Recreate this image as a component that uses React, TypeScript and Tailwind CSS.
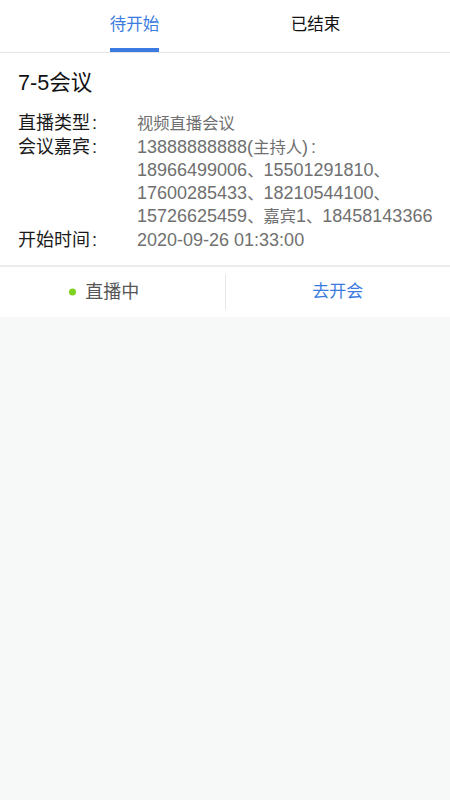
import React from "react";

const font = {
  fontFamily: '"Liberation Sans", "Noto Sans CJK SC", sans-serif',
};

function V({ text }: { text: string }) {
  const parts = text.split(/([\u3000-\u303f\u4e00-\u9fff\uff00-\uffef]+)/);
  return (
    <>
      {parts.map((p, i) =>
        /[\u3000-\u303f\u4e00-\u9fff\uff00-\uffef]/.test(p) ? (
          <span key={i} className="text-[16.3px]">
            {p}
          </span>
        ) : (
          <React.Fragment key={i}>{p}</React.Fragment>
        )
      )}
    </>
  );
}

export default function App() {
  return (
    <div className="min-h-[800px] w-full bg-[#f7f8f8] flex flex-col" style={font}>
      {/* Tabs */}
      <div className="bg-white border-b border-[#e6e6e6] grid grid-cols-2 px-[44px] h-[53px]">
        <div className="flex flex-col items-center">
          <div className="flex flex-col items-stretch h-full">
            <span className="pt-[12px] text-[16.5px] leading-[24px] text-[#3b7be0]">待开始</span>
            <div className="mt-auto h-[4px] bg-[#3b7be0]" />
          </div>
        </div>
        <div className="flex flex-col items-center">
          <span className="pt-[12px] text-[16.5px] leading-[24px] text-[#111]">已结束</span>
        </div>
      </div>

      {/* Card */}
      <div className="bg-white">
        <div className="px-[18px] pt-[16px] pb-[13px] border-b-2 border-[#ececec]">
          <div className="text-[21.6px] leading-[28px] text-[#111] mb-[15px]">7-5会议</div>
          <div className="flex flex-col gap-[1px] text-[18px] leading-[23px]">
            <div className="flex">
              <span className="w-[119px] shrink-0 text-[#1a1a1a]">直播类型<span className="ml-[2px]">:</span></span>
              <span className="text-[#707070]"><V text="视频直播会议" /></span>
            </div>
            <div className="flex">
              <span className="w-[119px] shrink-0 text-[#1a1a1a]">会议嘉宾<span className="ml-[2px]">:</span></span>
              <div className="flex flex-col text-[#707070] whitespace-nowrap">
                <span><V text="13888888888(主持人)" /><span className="ml-[3px]">:</span></span>
                <span><V text="18966499006、15501291810、" /></span>
                <span><V text="17600285433、18210544100、" /></span>
                <span><V text="15726625459、嘉宾1、18458143366" /></span>
              </div>
            </div>
            <div className="flex">
              <span className="w-[119px] shrink-0 text-[#1a1a1a]">开始时间<span className="ml-[2px]">:</span></span>
              <span className="text-[#707070]">2020-09-26 01:33:00</span>
            </div>
          </div>
        </div>
        <div className="flex items-center h-[50px]">
          <div className="flex-1 flex justify-center">
            <div className="relative">
              <span className="absolute left-[-16px] top-1/2 -translate-y-1/2 w-[7px] h-[7px] rounded-full bg-[#7ed321]" />
              <span className="text-[18px] leading-[24px] text-[#555]">直播中</span>
            </div>
          </div>
          <div className="w-px h-[36px] bg-[#e6e6e6]" />
          <div className="flex-1 flex justify-center">
            <span className="text-[17px] leading-[24px] text-[#3b7be0]">去开会</span>
          </div>
        </div>
      </div>
    </div>
  );
}
